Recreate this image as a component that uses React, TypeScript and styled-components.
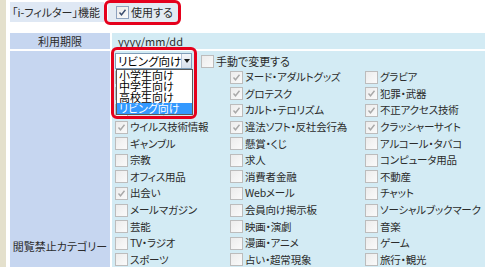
import styled, { createGlobalStyle } from 'styled-components'

const GlobalStyle = createGlobalStyle`
    html, body {
        margin: 0;
        background: #ffffff;
    }
    body {
        font-family: 'Noto Sans CJK JP', 'Noto Sans', sans-serif;
        font-size: 11px;
        font-feature-settings: 'palt';
        color: #2b2b2b;
    }
`

type Item = { label: string; on?: boolean }

const categories: Item[][] = [
    [{ label: 'アダルト', on: true }, { label: 'ヌード・アダルトグッズ', on: true }, { label: 'グラビア' }],
    [{ label: '成人向け話題', on: true }, { label: 'グロテスク', on: true }, { label: '犯罪・武器', on: true }],
    [{ label: '違法薬物乱用', on: true }, { label: 'カルト・テロリズム', on: true }, { label: '不正アクセス技術', on: true }],
    [{ label: 'ウイルス技術情報', on: true }, { label: '違法ソフト・反社会行為', on: true }, { label: 'クラッシャーサイト', on: true }],
    [{ label: 'ギャンブル' }, { label: '懸賞・くじ' }, { label: 'アルコール・タバコ' }],
    [{ label: '宗教' }, { label: '求人' }, { label: 'コンピュータ用品' }],
    [{ label: 'オフィス用品' }, { label: '消費者金融' }, { label: '不動産' }],
    [{ label: '出会い', on: true }, { label: 'Webメール' }, { label: 'チャット' }],
    [{ label: 'メールマガジン' }, { label: '会員向け掲示板' }, { label: 'ソーシャルブックマーク' }],
    [{ label: '芸能' }, { label: '映画・演劇' }, { label: '音楽' }],
    [{ label: 'TV・ラジオ' }, { label: '漫画・アニメ' }, { label: 'ゲーム' }],
    [{ label: 'スポーツ' }, { label: '占い・超常現象' }, { label: '旅行・観光' }],
    [{ label: 'ニュース' }, { label: '掲示板' }, { label: 'ブログ' }],
    [{ label: 'ショッピング' }, { label: 'オークション' }, { label: '金融・投資' }],
    [{ label: 'グルメ' }, { label: '住まい・インテリア' }, { label: 'ファッション' }],
    [{ label: '美容・健康' }, { label: '医療・病院' }, { label: '自動車' }],
    [{ label: '教育・学習' }, { label: '辞書・検索' }, { label: '地図・交通' }],
    [{ label: 'ポータルサイト' }, { label: '天気' }, { label: '動画共有' }],
    [{ label: '画像共有' }, { label: '音楽共有' }, { label: 'ファイル共有' }],
    [{ label: 'オンラインゲーム' }, { label: '懸賞サイト' }, { label: '占い' }],
    [{ label: '政治・社会' }, { label: '官公庁' }, { label: '企業・団体' }],
    [{ label: '趣味' }, { label: '写真・デザイン' }, { label: 'その他' }],
]

const targets = ['小学生向け', '中学生向け', '高校生向け', 'リビング向け']

const Page = styled.div`
    min-height: 100vh;
    border-left: 6px solid #e4e0cc;
    padding: 2px 0 0 4px;
    box-sizing: border-box;
`

const FeatureRow = styled.div`
    display: flex;
    align-items: center;
    gap: 4px;
`

const FeatureLabel = styled.div`
    width: 92px;
    height: 20px;
    line-height: 20px;
    padding-left: 2px;
    background: #dfe8f4;
    white-space: nowrap;
`

const Marked = styled.div<{ $inset: string }>`
    position: relative;
    &::after {
        content: '';
        position: absolute;
        inset: ${({ $inset }) => $inset};
        border: 3px solid #e5001c;
        border-radius: 6px;
        pointer-events: none;
    }
`

const FeatureValue = styled.label`
    display: flex;
    align-items: center;
    height: 20px;
    padding: 0 5px 0 8px;
    background: #e3ebf3;
`

const SettingsTable = styled.div`
    display: grid;
    grid-template-columns: 100px 373px;
    gap: 2px;
    margin-top: 11px;
`

const LabelCell = styled.div<{ $height?: number }>`
    display: flex;
    align-items: center;
    justify-content: center;
    height: ${({ $height }) => ($height ? `${$height}px` : 'auto')};
    background: #c6d6f0;
    white-space: nowrap;
`

const ValueCell = styled.div<{ $pad: string }>`
    background: #d3ebf4;
    padding: ${({ $pad }) => $pad};
    line-height: 16px;
`

const ControlLine = styled.div`
    display: flex;
    align-items: center;
    gap: 9px;
    height: 16px;
`

const SelectBox = styled.div`
    display: flex;
    align-items: stretch;
    width: 77px;
    height: 16px;
    box-sizing: border-box;
    border: 1px solid #7f9db9;
    background: #ffffff;
`

const SelectText = styled.span`
    flex: 1;
    padding-left: 2px;
    font-size: 11.5px;
    line-height: 14px;
    color: #000000;
    white-space: nowrap;
`

const ArrowButton = styled.span`
    width: 15px;
    display: flex;
    align-items: center;
    justify-content: center;
    background: linear-gradient(#f4f6fa, #d8dfea);
    border-left: 1px solid #b7c3d6;
    &::before {
        content: '';
        border-left: 3.5px solid transparent;
        border-right: 3.5px solid transparent;
        border-top: 4px solid #1a1a1a;
    }
`

const OptionList = styled.ul`
    position: absolute;
    top: 16px;
    left: 1px;
    width: 77px;
    margin: 0;
    padding: 0;
    list-style: none;
    background: #ffffff;
    border: 1px solid #5a5a5a;
    box-sizing: border-box;
    z-index: 2;
`

const Option = styled.li<{ $selected?: boolean }>`
    height: 11px;
    line-height: 11px;
    padding-left: 2px;
    font-size: 11px;
    white-space: nowrap;
    color: ${({ $selected }) => ($selected ? '#ffffff' : '#000000')};
    background: ${({ $selected }) => ($selected ? '#3399ff' : 'transparent')};
`

const CheckGrid = styled.div`
    display: grid;
    grid-template-columns: 115px 135px 1fr;
    grid-auto-rows: 16.6px;
    font-size: 10.5px;
    letter-spacing: -0.2px;
`

const CheckItem = styled.label`
    display: flex;
    align-items: center;
    white-space: nowrap;
`

const Box = styled.span<{ $active?: boolean }>`
    display: inline-flex;
    align-items: center;
    justify-content: center;
    flex: none;
    width: 13px;
    height: 13px;
    margin-right: 2px;
    box-sizing: border-box;
    border: 1px solid ${({ $active }) => ($active ? '#8fa3bf' : '#bcbcbc')};
    background: linear-gradient(135deg, #ececec, #fafafa);
`

const Check = ({ on, active }: { on?: boolean; active?: boolean }) => (
    <Box $active={active}>
        {on && (
            <svg width="9" height="9" viewBox="0 0 9 9">
                <path
                    d="M1.5 4.5 L3.5 6.8 L7.5 1.8"
                    fill="none"
                    stroke={active ? '#3a4d6e' : '#a8a8a8'}
                    strokeWidth="1.4"
                />
            </svg>
        )}
    </Box>
)

export default function App() {
    return (
        <Page>
            <GlobalStyle />
            <FeatureRow>
                <FeatureLabel>「i-フィルター」機能</FeatureLabel>
                <Marked $inset="-2px -3px -3px -4px">
                    <FeatureValue>
                        <Check on active />
                        使用する
                    </FeatureValue>
                </Marked>
            </FeatureRow>

            <SettingsTable>
                <LabelCell $height={16}>利用期限</LabelCell>
                <ValueCell $pad="0 6px">yyyy/mm/dd</ValueCell>

                <LabelCell>閲覧禁止カテゴリー</LabelCell>
                <ValueCell $pad="2px 4px 6px 3px">
                    <ControlLine>
                        <Marked $inset="-6px -5px -50px -4px">
                            <SelectBox>
                                <SelectText>リビング向け</SelectText>
                                <ArrowButton />
                            </SelectBox>
                            <OptionList>
                                {targets.map((t, i) => (
                                    <Option key={t} $selected={i === targets.length - 1}>
                                        {t}
                                    </Option>
                                ))}
                            </OptionList>
                        </Marked>
                        <CheckItem>
                            <Check />
                            手動で変更する
                        </CheckItem>
                    </ControlLine>
                    <CheckGrid>
                        {categories.flat().map((c) => (
                            <CheckItem key={c.label}>
                                <Check on={c.on} />
                                {c.label}
                            </CheckItem>
                        ))}
                    </CheckGrid>
                </ValueCell>
            </SettingsTable>
        </Page>
    )
}
